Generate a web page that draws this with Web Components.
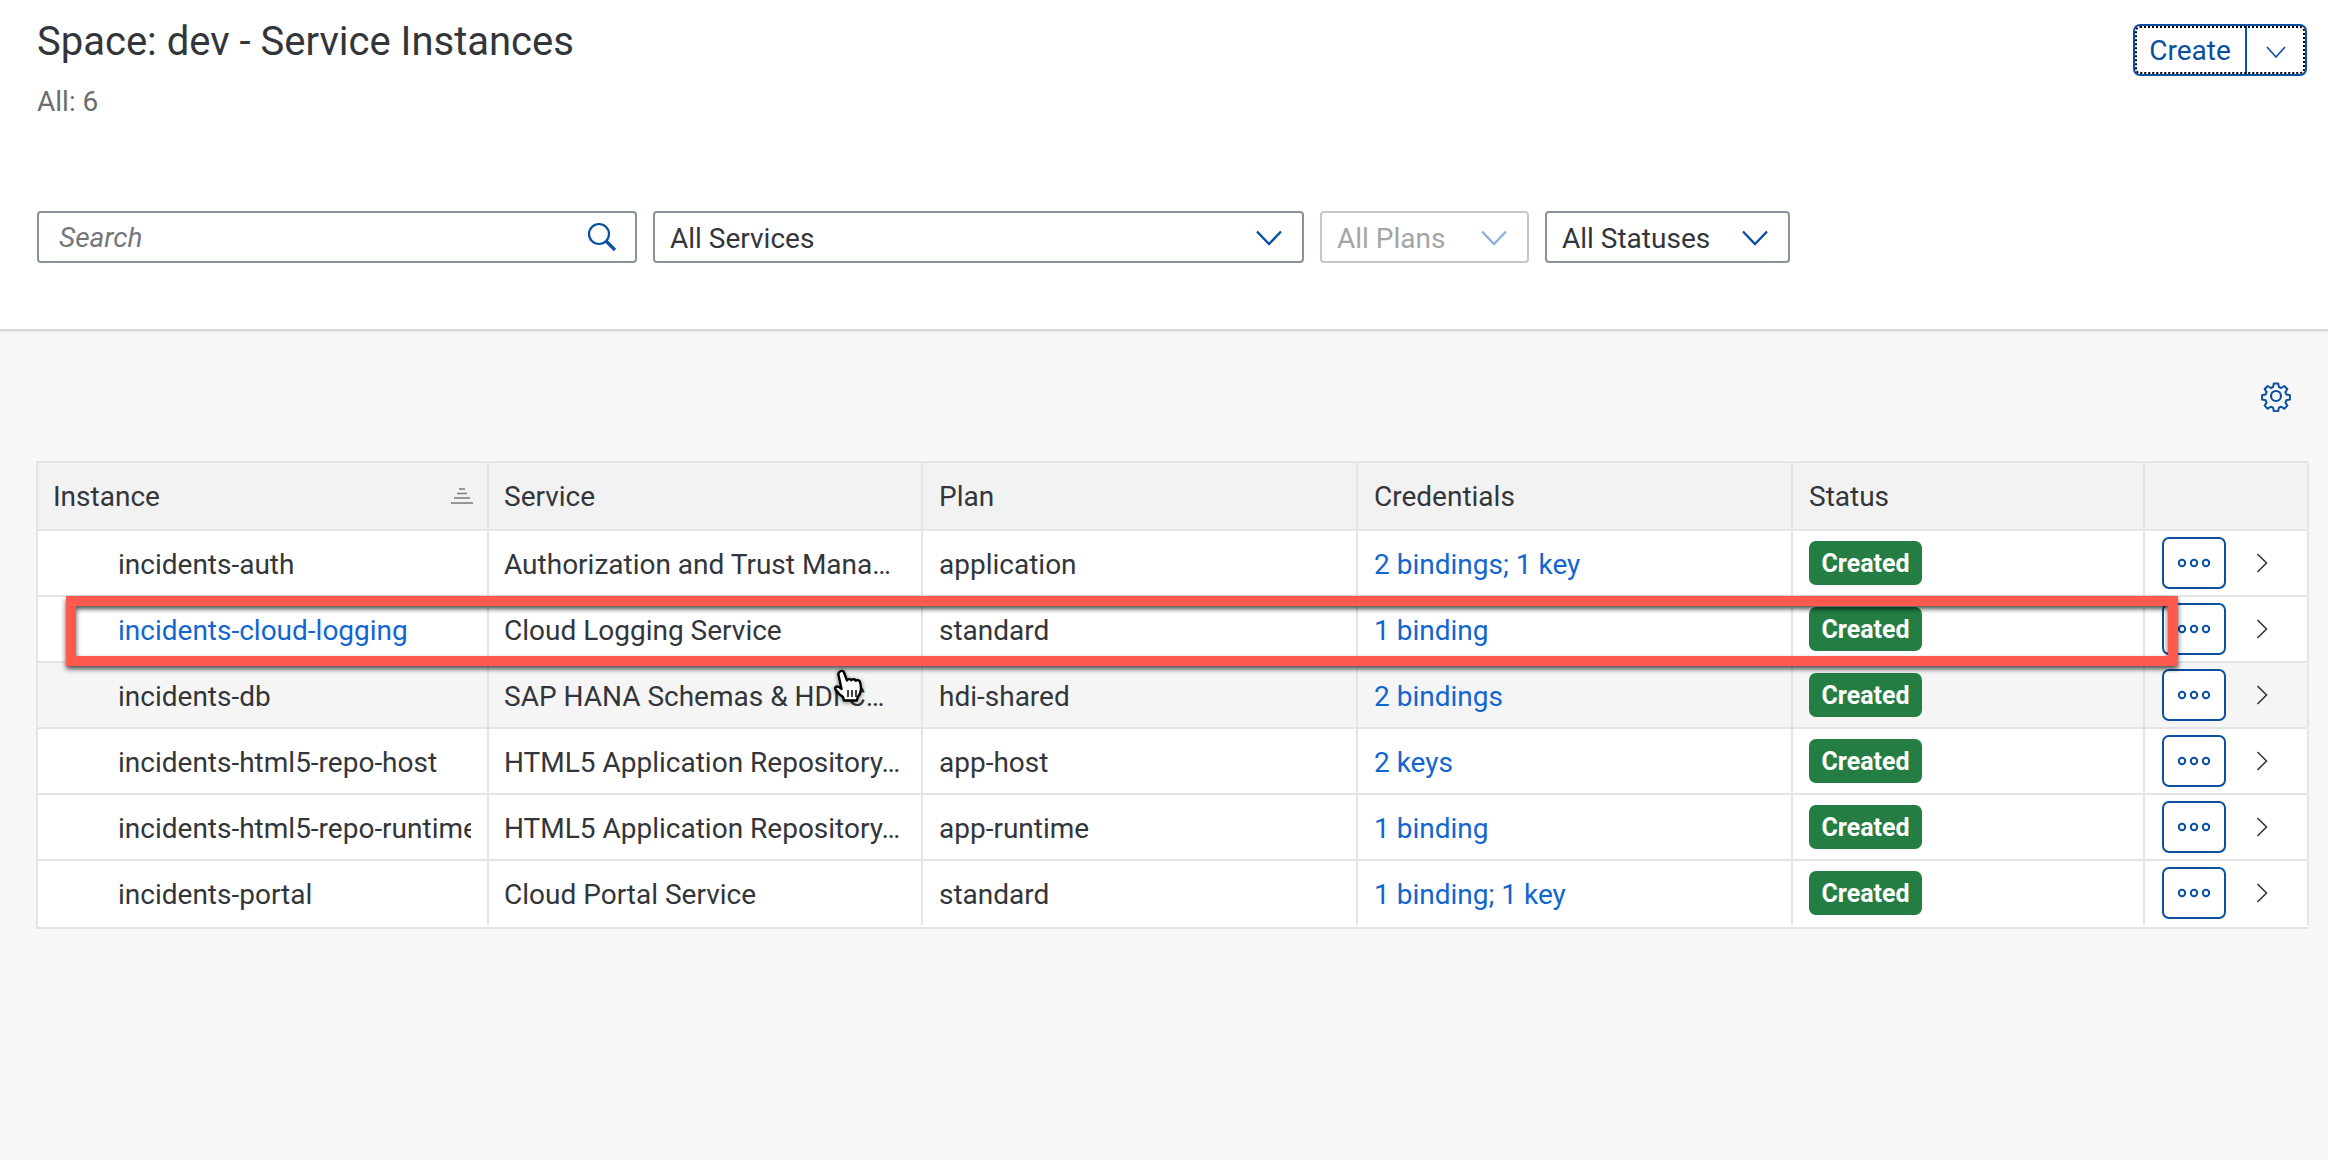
<!DOCTYPE html>
<html lang="en">
  <head>
    <meta charset="UTF-8">
    <title>Space: dev - Service Instances</title>
    <style>
      html, body {
        margin: 0;
        height: 100%;
      }
      body {
        background: #f7f7f7;
        color: #32363a;
        font-family: Roboto, "Liberation Sans", sans-serif;
        font-size: 28px;
        overflow: hidden;
      }
    </style>
  </head>
  <body>
    <page-header heading="Space: dev - Service Instances" count="All: 6">
      <split-button slot="actions">Create</split-button>
      <search-field slot="filters" placeholder="Search"></search-field>
      <select-box slot="filters" style="width: 651px">All Services</select-box>
      <select-box slot="filters" style="width: 209px" disabled>All Plans</select-box>
      <select-box slot="filters" style="width: 245px">All Statuses</select-box>
    </page-header>
    <instance-table></instance-table>
    <hand-cursor></hand-cursor>

    <script>
      const chevronDown = '<svg viewBox="0 0 26 16" width="26" height="16" fill="none" stroke="currentColor" stroke-width="2.4"><path d="M1 1.5 13 14 25 1.5"/></svg>'

      class PageHeader extends HTMLElement {
        constructor() {
          super()
          this.attachShadow({ mode: 'open' }).innerHTML = `
            <style>
              :host {
                display: block;
                background: #fff;
                height: 331px;
                box-sizing: border-box;
                padding: 24px 21px 0 37px;
                border-bottom: 2px solid #d9d9d9;
                box-shadow: 0 1px 3px rgba(0, 0, 0, .06);
              }
              .top {
                display: flex;
                justify-content: space-between;
                align-items: flex-start;
              }
              h1 {
                margin: 0;
                font-size: 40px;
                font-weight: 400;
                line-height: 36px;
                color: #32363a;
              }
              .count {
                margin-top: 27px;
                font-size: 28px;
                line-height: 30px;
                color: #6a6d70;
              }
              .filters {
                display: flex;
                gap: 16px;
                margin-top: 94px;
              }
            </style>
            <div class="top">
              <div>
                <h1></h1>
                <div class="count"></div>
              </div>
              <slot name="actions"></slot>
            </div>
            <div class="filters"><slot name="filters"></slot></div>
          `
          this.shadowRoot.querySelector('h1').textContent = this.getAttribute('heading')
          this.shadowRoot.querySelector('.count').textContent = this.getAttribute('count')
        }
      }

      class SplitButton extends HTMLElement {
        constructor() {
          super()
          this.attachShadow({ mode: 'open' }).innerHTML = `
            <style>
              :host {
                display: inline-flex;
                box-sizing: border-box;
                width: 174px;
                height: 52px;
                border: 2px solid #0a4fa0;
                border-radius: 7px;
                color: #0a4fa0;
                background: #fff;
                position: relative;
              }
              :host::after {
                content: '';
                position: absolute;
                inset: 0;
                border: 2px dotted #000;
                border-radius: 5px;
              }
              .label {
                width: 110px;
                display: flex;
                align-items: center;
                justify-content: center;
                border-right: 2px solid #0a4fa0;
                font-size: 28px;
              }
              .arrow {
                flex: 1;
                display: flex;
                align-items: center;
                justify-content: center;
                padding-top: 4px;
              }
              svg {
                width: 20px;
                height: 12px;
              }
            </style>
            <div class="label"><slot></slot></div>
            <div class="arrow"><svg viewBox="0 0 20 12" fill="none" stroke="currentColor" stroke-width="1.6"><path d="M1 1 10 11 19 1"/></svg></div>
          `
        }
      }

      class SearchField extends HTMLElement {
        constructor() {
          super()
          this.attachShadow({ mode: 'open' }).innerHTML = `
            <style>
              :host {
                display: flex;
                align-items: center;
                justify-content: space-between;
                box-sizing: border-box;
                width: 600px;
                height: 52px;
                padding: 0 18px 0 20px;
                background: #fff;
                border: 2px solid #89919a;
                border-radius: 4px;
                color: #74777a;
                font-style: italic;
              }
              svg {
                display: block;
              }
            </style>
            <span></span>
            <svg width="30" height="30" viewBox="0 0 30 30" fill="none" stroke="#0a4fa0"><circle cx="12" cy="12" r="10" stroke-width="2.2"/><path d="M19 19 28 28" stroke-width="3.2"/></svg>
          `
          this.shadowRoot.querySelector('span').textContent = this.getAttribute('placeholder')
        }
      }

      class SelectBox extends HTMLElement {
        constructor() {
          super()
          this.attachShadow({ mode: 'open' }).innerHTML = `
            <style>
              :host {
                display: flex;
                align-items: center;
                justify-content: space-between;
                box-sizing: border-box;
                height: 52px;
                padding: 2px 20px 0 15px;
                background: #fff;
                border: 2px solid #89919a;
                border-radius: 4px;
                color: #32363a;
              }
              :host([disabled]) {
                border-color: #c4c8cc;
                color: #a3a5a7;
              }
              svg {
                color: #0a4fa0;
                display: block;
              }
              :host([disabled]) svg {
                color: #8fb0d8;
              }
            </style>
            <slot></slot>
            ${chevronDown}
          `
        }
      }

      class StatusTag extends HTMLElement {
        constructor() {
          super()
          this.attachShadow({ mode: 'open' }).innerHTML = `
            <style>
              :host {
                display: inline-flex;
                align-items: center;
                justify-content: center;
                box-sizing: border-box;
                width: 113px;
                height: 44px;
                border-radius: 7px;
                background: #247d42;
                color: #fff;
                font-size: 25px;
                font-weight: 700;
              }
            </style>
            <slot></slot>
          `
        }
      }

      class MoreButton extends HTMLElement {
        constructor() {
          super()
          this.attachShadow({ mode: 'open' }).innerHTML = `
            <style>
              :host {
                display: inline-flex;
                align-items: center;
                justify-content: center;
                box-sizing: border-box;
                width: 64px;
                height: 52px;
                border: 2px solid #0a4fa0;
                border-radius: 7px;
                background: #fff;
              }
            </style>
            <svg width="34" height="10" viewBox="0 0 34 10" fill="none" stroke="#0a4fa0" stroke-width="2"><circle cx="5" cy="5" r="3.2"/><circle cx="17" cy="5" r="3.2"/><circle cx="29" cy="5" r="3.2"/></svg>
          `
        }
      }

      // texts are cut the way the table shows them
      const instances = [
        ['incidents-auth', 'Authorization and Trust Mana…', 'application', '2 bindings; 1 key'],
        ['incidents-cloud-logging', 'Cloud Logging Service', 'standard', '1 binding'],
        ['incidents-db', 'SAP HANA Schemas &amp; HDI C…', 'hdi-shared', '2 bindings'],
        ['incidents-html5-repo-host', 'HTML5 Application Repository…', 'app-host', '2 keys'],
        ['incidents-html5-repo-runtime', 'HTML5 Application Repository…', 'app-runtime', '1 binding'],
        ['incidents-portal', 'Cloud Portal Service', 'standard', '1 binding; 1 key']
      ]

      class InstanceTable extends HTMLElement {
        constructor() {
          super()
          const rows = instances.map((item, i) => `
            <div class="row${i === 2 ? ' hover' : ''}">
              <div class="cell name${i === 1 ? ' active' : ''}"><span>${item[0]}</span></div>
              <div class="cell text">${item[1]}</div>
              <div class="cell text wide">${item[2]}</div>
              <div class="cell text wide link">${item[3]}</div>
              <div class="cell wide"><status-tag>Created</status-tag></div>
              <div class="cell actions">
                <more-button></more-button>
                <svg width="12" height="20" viewBox="0 0 12 20" fill="none" stroke="#32363a" stroke-width="1.6"><path d="M1.5 1 10.5 10 1.5 19"/></svg>
              </div>
            </div>
          `).join('')
          this.attachShadow({ mode: 'open' }).innerHTML = `
            <style>
              :host {
                display: block;
                position: relative;
                padding: 0 20px 0 36px;
              }
              .tools {
                display: flex;
                justify-content: flex-end;
                height: 130px;
                padding: 49px 0 0;
                box-sizing: border-box;
              }
              .gear {
                margin-right: 16px;
                display: block;
              }
              .table {
                border: solid #e5e5e5;
                border-width: 2px 0 0 2px;
              }
              .row {
                display: grid;
                grid-template-columns: 451px 434px 435px 435px 352px 164px;
                height: 66px;
                background: #fff;
                border-bottom: 2px solid #e5e5e5;
                box-sizing: border-box;
              }
              .row:last-child {
                height: 68px;
                padding-bottom: 2px;
              }
              .row.head {
                height: 68px;
                background: #f2f2f2;
              }
              .row.hover {
                background: #f5f5f5;
              }
              .cell {
                display: flex;
                align-items: center;
                min-width: 0;
                padding: 0 14px 0 15px;
                border-right: 2px solid #e5e5e5;
                white-space: nowrap;
              }
              .cell.wide, .head .cell:nth-child(n+3) {
                padding-left: 16px;
              }
              .head .first {
                justify-content: space-between;
              }
              .text {
                padding-top: 2px;
                box-sizing: border-box;
              }
              .name {
                padding: 2px 16px 0 80px;
              }
              .name span {
                display: block;
                overflow: hidden;
              }
              .name.active, .link {
                color: #1266d0;
              }
              .actions {
                padding: 0 0 0 17px;
                gap: 30px;
              }
              .mark {
                position: absolute;
                left: 66px;
                top: 265px;
                width: 2112px;
                height: 70px;
                box-sizing: border-box;
                border: 10px solid #ff5a4d;
                box-shadow: 0 3px 5px rgba(0, 0, 0, .7), inset 0 3px 5px rgba(0, 0, 0, .7);
              }
            </style>
            <div class="tools">
              <svg class="gear" width="32" height="32" viewBox="0 0 32 32" fill="none" stroke="#0a4fa0" stroke-width="2.2" stroke-linejoin="round"><circle cx="16" cy="16" r="5"/><path d="M13.6 2h4.8l.8 4 2.6 1.1 3.4-2.2 3.4 3.4-2.2 3.4 1.1 2.6 4 .8v4.8l-4 .8-1.1 2.6 2.2 3.4-3.4 3.4-3.4-2.2-2.6 1.1-.8 4h-4.8l-.8-4-2.6-1.1-3.4 2.2-3.4-3.4 2.2-3.4-1.1-2.6-4-.8v-4.8l4-.8 1.1-2.6-2.2-3.4 3.4-3.4 3.400 2.200 2.600-1.100z" transform="translate(1.6 1.6) scale(.9)"/></svg>
            </div>
            <div class="table">
              <div class="row head">
                <div class="cell first">Instance
                  <svg width="22" height="16" viewBox="0 0 22 16" stroke="#7a7a7a" stroke-width="1.6"><path d="M8 1h6M6 5.500h10M3 10h16M0 15h22"/></svg>
                </div>
                <div class="cell">Service</div>
                <div class="cell">Plan</div>
                <div class="cell">Credentials</div>
                <div class="cell">Status</div>
                <div class="cell"></div>
              </div>
              ${rows}
            </div>
            <div class="mark"></div>
          `
        }
      }

      class HandCursor extends HTMLElement {
        constructor() {
          super()
          this.attachShadow({ mode: 'open' }).innerHTML = `
            <style>
              :host {
                position: absolute;
                left: 834px;
                top: 668px;
                width: 32px;
                height: 36px;
                filter: drop-shadow(0 1px 2px rgba(0, 0, 0, .5));
              }
            </style>
            <svg width="32" height="36" viewBox="0 0 32 34" fill="#fff" stroke="#000" stroke-width="2.4" stroke-linejoin="round">
              <path d="M6 2.500c1.600-1.200 3.400-.6 4 1l3 8c.4-1.600 3.400-2 4.400-.2.6-1.400 3.600-1.400 4.400.4.8-1 3.400-.8 4 .8 1 2.800 1.400 5.600 1 9-.4 3-1.600 5-3 6.500l-1 3.500H10l-1-3.500c-2.500-1.500-5.500-4.500-7.500-7.500-.8-1.400 0-3 1.500-3 1.500 0 3 .8 4.500 2.500L4.500 6c-.4-1.300.4-2.800 1.500-3.500z"/>
              <path d="M14 21v7M18 21v7M22 21v7" stroke-width="1.500" fill="none"/>
            </svg>
          `
        }
      }

      customElements.define('page-header', PageHeader)
      customElements.define('split-button', SplitButton)
      customElements.define('search-field', SearchField)
      customElements.define('select-box', SelectBox)
      customElements.define('status-tag', StatusTag)
      customElements.define('more-button', MoreButton)
      customElements.define('instance-table', InstanceTable)
      customElements.define('hand-cursor', HandCursor)
    </script>
  </body>
</html>
